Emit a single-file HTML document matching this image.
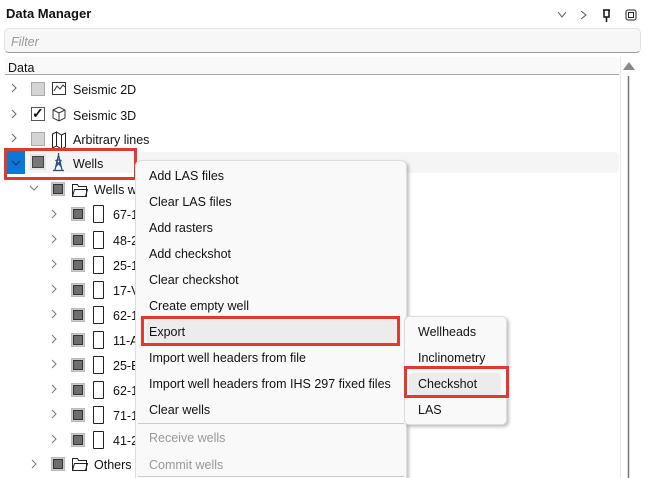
<!DOCTYPE html><html><head><style>
html,body{margin:0;width:645px;height:478px;overflow:hidden}
body{background:#fff;font-family:"Liberation Sans",sans-serif;font-size:12.5px;color:#111;position:relative}
.a{position:absolute}
.t{position:absolute;white-space:nowrap;line-height:16px}
.cb{position:absolute;width:12px;height:12px;border:1px solid #aaa;background:#d4d4d4}
.pc{position:absolute;width:14px;height:14px;border:1px solid #bbb;background:#ccc;box-sizing:border-box}
.pc:after{content:"";position:absolute;left:1px;top:1px;width:8px;height:8px;background:#6e6e6e;border:1px solid #333}
.doc{position:absolute;width:9px;height:16px;border:1px solid #222;border-radius:1px}
.mi{position:absolute;left:149px;white-space:nowrap;line-height:16px}
</style></head><body>
<div class="t" style="left:6px;top:6px;font-weight:bold;font-size:13px">Data Manager</div>
<svg class="a" style="left:555px;top:8px" width="90" height="14"><path d="M3 4l4 5 4-5" fill="none" stroke="#555"/><path d="M26 3l5 4-5 4" fill="none" stroke="#555"/><path d="M48 2h7M49 2v7h5V2M51.5 9v5" fill="none" stroke="#111" stroke-width="1.5"/><rect x="71" y="2" width="10" height="10" rx="2" fill="none" stroke="#222"/><rect x="73.5" y="4.5" width="5" height="5" fill="none" stroke="#222"/></svg>
<div class="a" style="left:4px;top:28px;width:635px;height:23px;background:#f7f7f7;border:1px solid #e2e2e2;border-bottom:1px solid #999;border-radius:5px"></div>
<div class="t" style="left:11px;top:34px;color:#999;font-style:italic">Filter</div>
<div class="a" style="left:5px;top:57px;width:614px;height:17px;background:#f9f9f9;border-bottom:1px solid #aaa"></div>
<div class="t" style="left:8px;top:60px">Data</div>
<svg class="a" style="left:620px;top:58px" width="20" height="420"><path d="M3 12l6-8 6 8z" fill="#888"/><path d="M8.5 18V420" stroke="#777" stroke-width="1.5"/></svg>
<div class="a" style="left:620px;top:56px;width:1px;height:422px;background:#e8e8e8"></div>
<svg class="a" style="left:0;top:75px" width="140" height="80">
<g fill="none" stroke="#666"><path d="M12 9l4 4-4 4M12 35l4 4-4 4M12 59l4 4-4 4"/></g>
</svg>
<div class="cb" style="left:31px;top:82px"></div>
<div class="a" style="left:31px;top:107px;width:12px;height:12px;border:1px solid #555;background:#fff"></div>
<div class="t" style="left:32px;top:105px;font-size:14px;font-weight:bold">✓</div>
<div class="cb" style="left:31px;top:132px"></div>
<svg class="a" style="left:51px;top:79px" width="18" height="72"><rect x="1.5" y="3.5" width="13" height="12" fill="none" stroke="#333"/><path d="M3 12l3-5 3 3 3-4 2 2" fill="none" stroke="#333"/>
<path d="M2 31l6-3 6 3v8l-6 3-6-3z M2 31l6 3 6-3M8 34v8" fill="none" stroke="#333"/>
<path d="M1.5 55l4-2v14l-4 2zM5.5 53l5 3v14l-5-3zM10.5 56l4-2v14l-4 2z" fill="none" stroke="#222"/></svg>
<div class="t" style="left:73px;top:82px">Seismic 2D</div>
<div class="t" style="left:73px;top:108px">Seismic 3D</div>
<div class="t" style="left:73px;top:132px">Arbitrary lines</div>
<div class="a" style="left:6px;top:152px;width:613px;height:21px;background:#f5f5f5;border-radius:4px"></div>
<div class="a" style="left:6px;top:150px;width:19px;height:24px;background:#0a78d4"></div>
<svg class="a" style="left:6px;top:150px" width="20" height="24"><path d="M6 11l4 4 4-4" fill="none" stroke="#1a3a66" stroke-width="1.2"/></svg>
<div class="a" style="left:32px;top:156px;width:10px;height:10px;background:#777;border:1px solid #444;outline:2px solid #e4e4e4"></div>
<svg class="a" style="left:51px;top:152px" width="16" height="20"><path d="M7.5 1v2M4 18L7.5 3 11 18M5 12h5M5.5 8h4M4.5 15l6-7M10.5 15l-6-7M2 18.5h11" fill="none" stroke="#2d4f80" stroke-width="1.3"/></svg>
<div class="t" style="left:73px;top:156px">Wells</div>
<div class="a" style="left:4px;top:148px;width:127px;height:26px;border:3px solid #e03a2f"></div>
<svg class="a" style="left:0;top:180px" width="140" height="298">
<g fill="none" stroke="#777"><path d="M30 6l4 4 4-4"/>
<path d="M52 30l4 4-4 4M52 55l4 4-4 4M52 80l4 4-4 4M52 105l4 4-4 4M52 130l4 4-4 4M52 155l4 4-4 4M52 180l4 4-4 4M52 205l4 4-4 4M52 230l4 4-4 4M52 255l4 4-4 4M32 280l4 4-4 4"/></g>
<g fill="none" stroke="#222"><path d="M72.5 4.5h5l1 2h8v10h-14z M72.5 16.5l2-7h13l-2 7"/><path d="M72.5 278.5h5l1 2h8v10h-14z M72.5 290.5l2-7h13l-2 7"/></g>
</svg>
<div class="pc" style="left:51px;top:182px"></div><div class="pc" style="left:51px;top:457px"></div>
<div class="t" style="left:94px;top:182px">Wells w</div>
<div class="t" style="left:94px;top:457px">Others</div>
<div class="pc" style="left:71px;top:207px"></div><div class="doc" style="left:93px;top:205px"></div><div class="t" style="left:113px;top:207px">67-1</div>
<div class="pc" style="left:71px;top:233px"></div><div class="doc" style="left:93px;top:231px"></div><div class="t" style="left:113px;top:233px">48-2</div>
<div class="pc" style="left:71px;top:258px"></div><div class="doc" style="left:93px;top:256px"></div><div class="t" style="left:113px;top:258px">25-1</div>
<div class="pc" style="left:71px;top:283px"></div><div class="doc" style="left:93px;top:281px"></div><div class="t" style="left:113px;top:283px">17-V</div>
<div class="pc" style="left:71px;top:308px"></div><div class="doc" style="left:93px;top:306px"></div><div class="t" style="left:113px;top:308px">62-1</div>
<div class="pc" style="left:71px;top:333px"></div><div class="doc" style="left:93px;top:331px"></div><div class="t" style="left:113px;top:333px">11-A</div>
<div class="pc" style="left:71px;top:358px"></div><div class="doc" style="left:93px;top:356px"></div><div class="t" style="left:113px;top:358px">25-E</div>
<div class="pc" style="left:71px;top:383px"></div><div class="doc" style="left:93px;top:381px"></div><div class="t" style="left:113px;top:383px">62-1</div>
<div class="pc" style="left:71px;top:408px"></div><div class="doc" style="left:93px;top:406px"></div><div class="t" style="left:113px;top:408px">71-1</div>
<div class="pc" style="left:71px;top:433px"></div><div class="doc" style="left:93px;top:431px"></div><div class="t" style="left:113px;top:433px">41-2</div>
<div class="a" style="left:135px;top:160px;width:270px;height:330px;background:#f9f9f9;border:1px solid #ddd;border-radius:6px;box-shadow:2px 2px 3px rgba(0,0,0,.25)"></div>
<div class="a" style="left:146px;top:320px;width:250px;height:23px;background:#ececec;border-radius:4px"></div>
<div class="mi" style="top:168px">Add LAS files</div>
<div class="mi" style="top:194px">Clear LAS files</div>
<div class="mi" style="top:220px">Add rasters</div>
<div class="mi" style="top:246px">Add checkshot</div>
<div class="mi" style="top:272px">Clear checkshot</div>
<div class="mi" style="top:298px">Create empty well</div>
<div class="mi" style="top:324px">Export</div>
<div class="mi" style="top:350px">Import well headers from file</div>
<div class="mi" style="top:376px">Import well headers from IHS 297 fixed files</div>
<div class="mi" style="top:402px">Clear wells</div>
<div class="a" style="left:138px;top:423px;width:266px;height:1px;background:#ccc"></div>
<div class="mi" style="top:430px;color:#999">Receive wells</div>
<div class="mi" style="top:457px;color:#999">Commit wells</div>
<div class="a" style="left:138px;top:476px;width:266px;height:1px;background:#ccc"></div>
<div class="a" style="left:141px;top:316px;width:253px;height:24px;border:3px solid #e03a2f"></div>
<div class="a" style="left:404px;top:316px;width:101px;height:107px;background:#f9f9f9;border:1px solid #ddd;border-radius:5px;box-shadow:2px 2px 3px rgba(0,0,0,.25)"></div>
<div class="a" style="left:409px;top:373px;width:92px;height:22px;background:#ececec;border-radius:4px"></div>
<div class="t" style="left:418px;top:324px">Wellheads</div>
<div class="t" style="left:418px;top:350px">Inclinometry</div>
<div class="t" style="left:418px;top:376px">Checkshot</div>
<div class="t" style="left:418px;top:402px">LAS</div>
<div class="a" style="left:404px;top:366px;width:99px;height:26px;border:3px solid #e03a2f"></div>
</body></html>
